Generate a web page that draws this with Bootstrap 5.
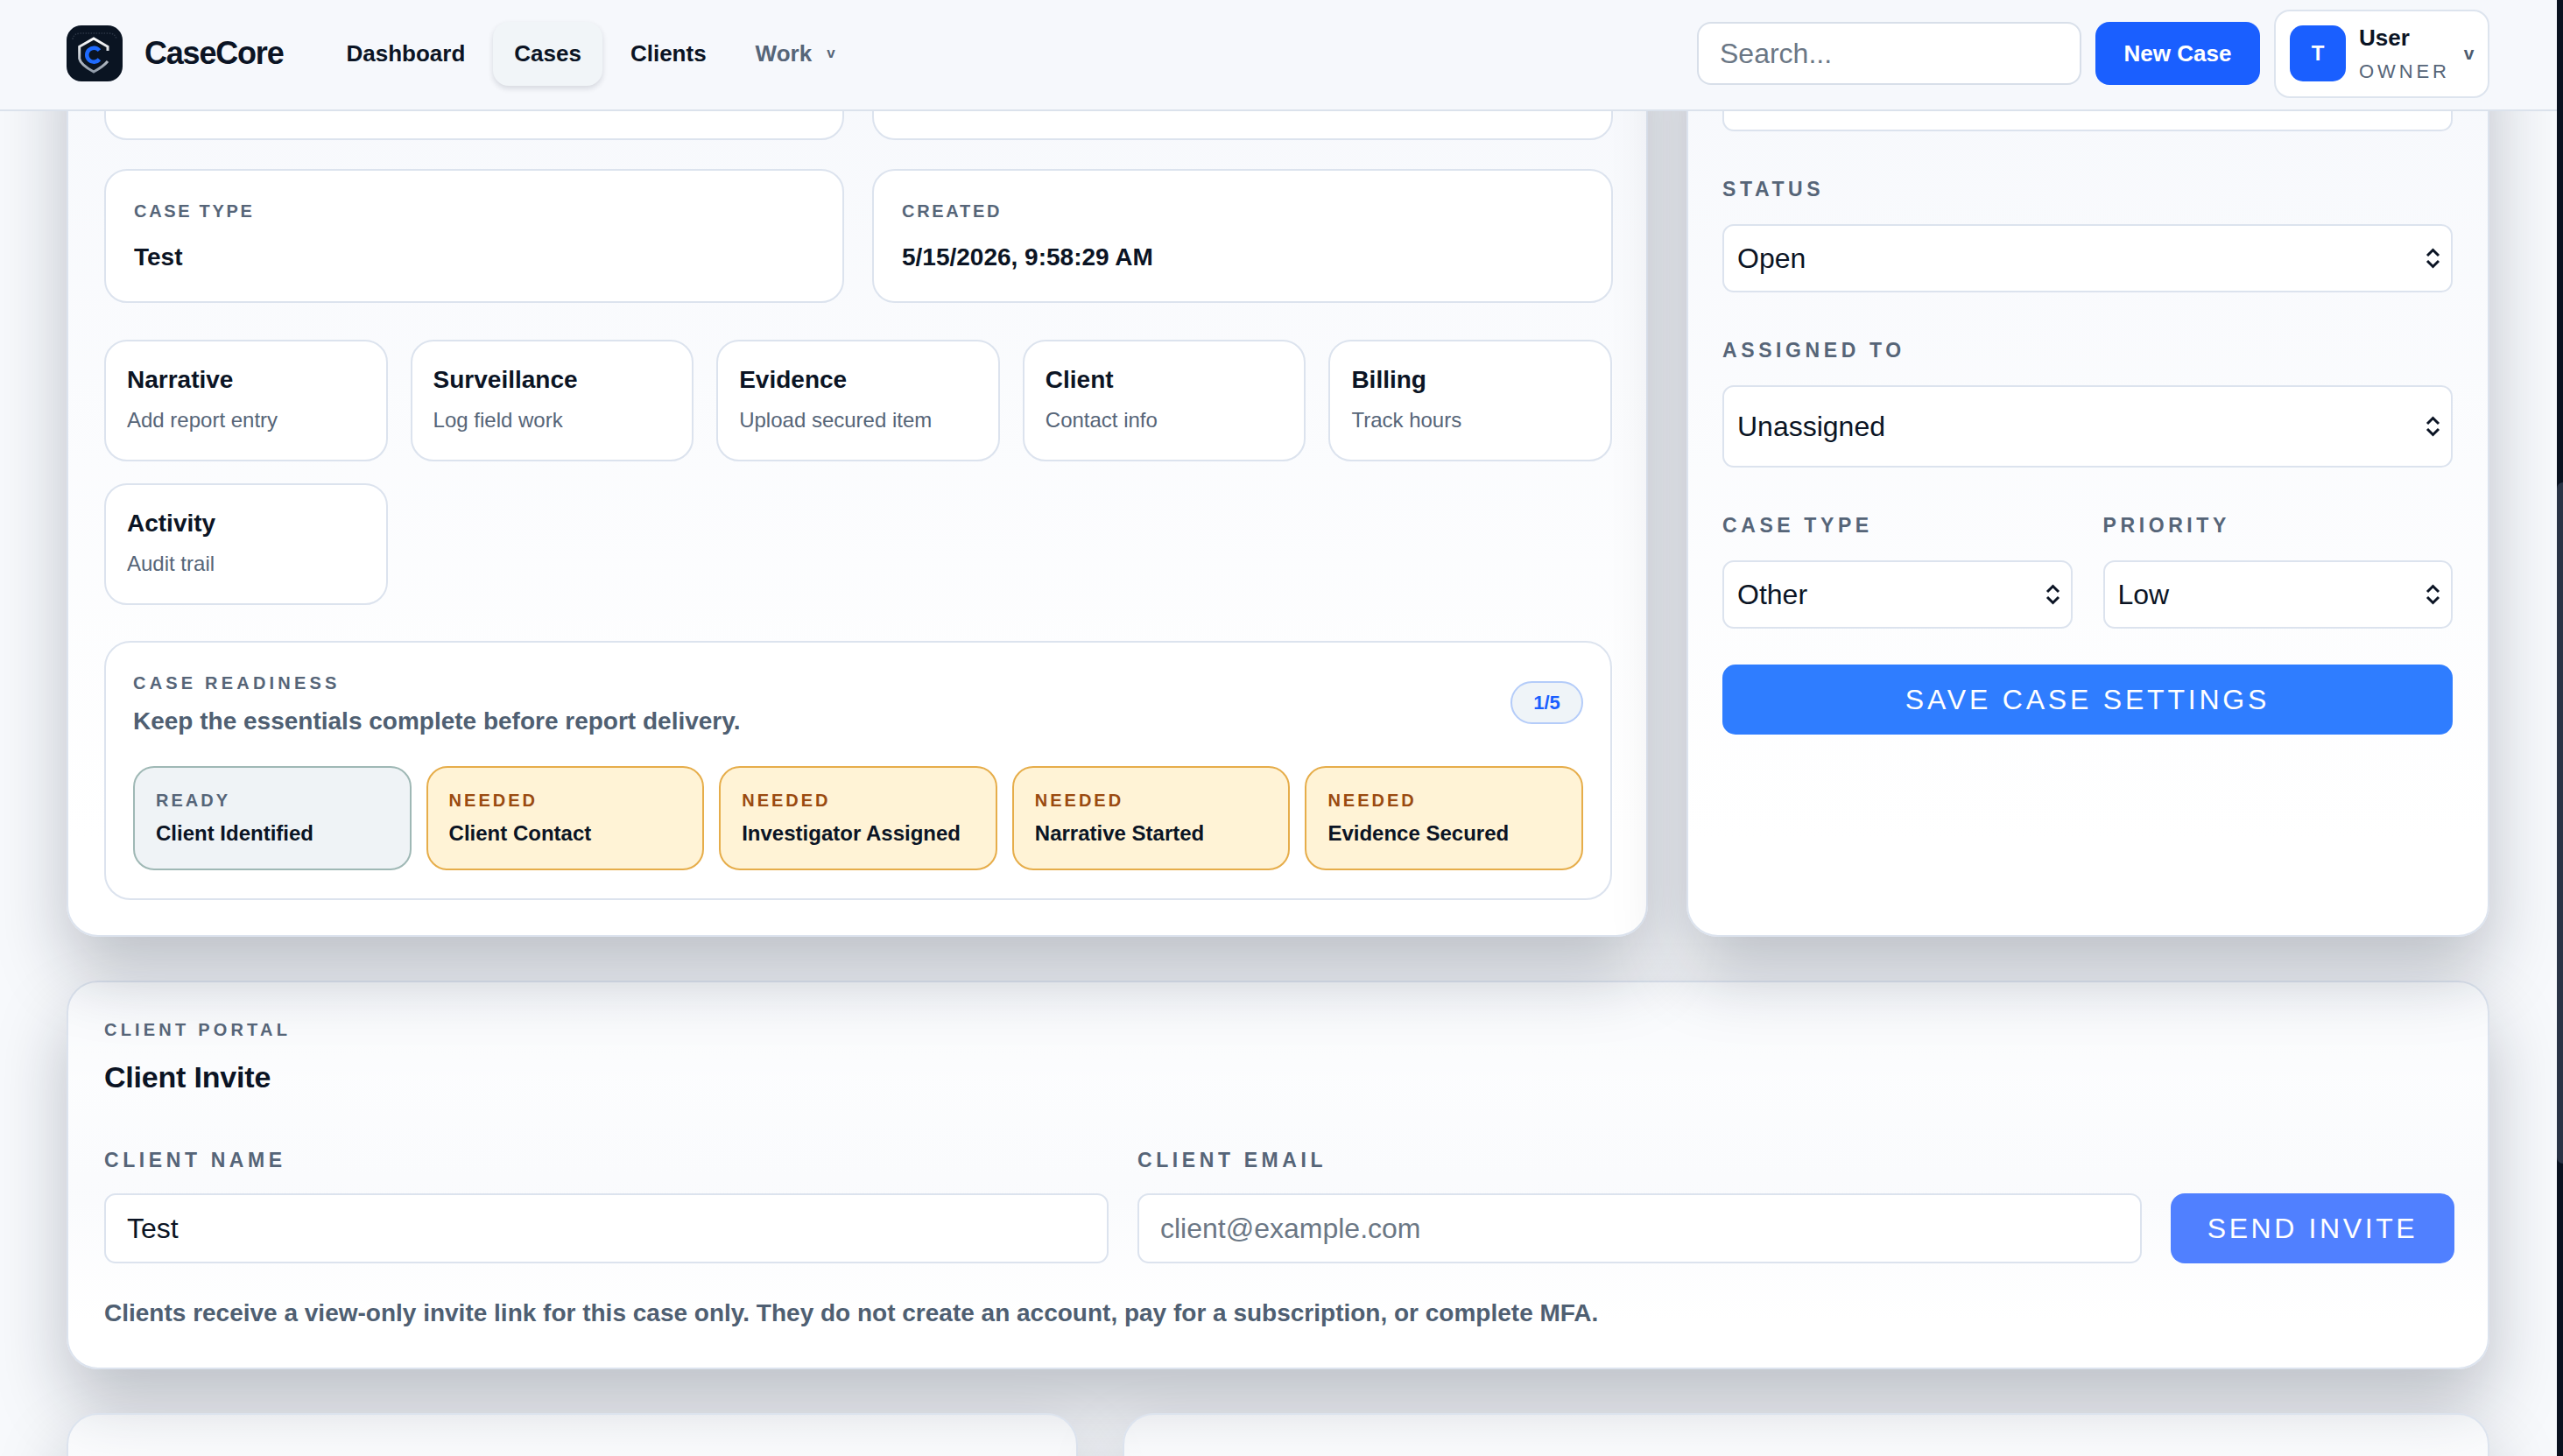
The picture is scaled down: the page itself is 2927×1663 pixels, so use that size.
<!DOCTYPE html>
<html lang="en">
<head>
<meta charset="utf-8">
<title>CaseCore</title>
<link rel="stylesheet" href="https://cdn.jsdelivr.net/npm/bootstrap@5.3.0/dist/css/bootstrap.min.css">
<style>
html,body{height:100%;overflow:hidden}
body{background:#f7f9fc;font-family:"Liberation Sans",Arial,sans-serif;color:#0b1424;}
.topbar{position:relative;z-index:20;height:127px;background:#f6f8fc;border-bottom:2px solid #dbe2ec;padding:0 84px 3px 76px;}
.logo-box{width:64px;height:64px;border-radius:17px;background:#0a1422;flex:none;}
.brand-name{font-size:36px;font-weight:700;letter-spacing:-1.2px;color:#0b1424;margin-left:25px;margin-right:48px;}
.nav-pill{font-size:26px;font-weight:700;color:#0b1424;height:73px;padding:0 24px;border-radius:18px;text-decoration:none;display:flex;align-items:center;}
.nav-pill.on{background:#f1f5f8;box-shadow:0 3px 6px rgba(15,23,42,.14);}
.nav-pill.soft{color:#566578;}
.caret-v{font-size:17px;margin-left:17px;}
.top-search{width:439px;height:72px;border:2px solid #d8dfe9;border-radius:16px;font-size:32px;padding:0 24px;color:#0b1424;background:#fff;}
.top-search::placeholder{color:#6b7785;}
.new-btn{width:188px;height:72px;background:#1a5fff;border:0;border-radius:16px;color:#fff;font-size:26px;font-weight:700;}
.user-box{width:246px;height:101px;background:#fff;border:2px solid #dde4ee;border-radius:18px;padding:0 0 0 16px;}
.avatar-box{width:64px;height:64px;border-radius:15px;background:#1a5fff;color:#fff;font-size:24px;font-weight:700;flex:none;}
.user-name{font-size:26px;font-weight:700;line-height:30px;}
.user-role{font-size:22px;letter-spacing:3.9px;color:#566578;line-height:26px;margin-top:11px;}
.user-caret{font-size:21px;font-weight:700;color:#4d5c70;margin-left:16px;}
.page-wrap{padding:0 84px 0 76px;margin-top:-127px;height:100vh;overflow:hidden;}
.upper-grid{display:grid;grid-template-columns:1806px 1fr;gap:44px;}
.shell{border:2px solid #dce3ee;border-radius:36px;background:linear-gradient(180deg,#f6f8fc 0,#fff 90%);box-shadow:0 40px 80px rgba(15,23,42,.25);}
.main-shell{height:1070px;padding:30px 39px 0 41px;}
.side-shell{height:1070px;padding:0 40px 0 39px;}
.info-grid{display:grid;grid-template-columns:845px 846px;gap:33px 32px;}
.info-card{background:#fff;border:2px solid #dce3ee;border-radius:26px;height:153px;padding:34px 32px 0;}
.info-card.clip{height:128px;}
.micro{font-size:20px;font-weight:700;letter-spacing:2.7px;line-height:24px;color:#566578;}
.micro.wide{letter-spacing:4.2px;}
.info-val{font-size:28px;font-weight:700;line-height:32px;margin-top:25px;}
.action-grid{display:grid;grid-template-columns:repeat(5,minmax(0,1fr));gap:25px 26px;margin-top:42px;}
.action-tile{background:#fff;border:2px solid #dce3ee;border-radius:26px;height:139px;padding:26px 24px 0;}
.action-title{font-size:28px;font-weight:700;line-height:36px;}
.action-sub{font-size:24px;color:#566578;line-height:28px;margin-top:14px;}
.ready-box{background:#fff;border:2px solid #dce3ee;border-radius:30px;height:296px;margin-top:41px;padding:34px 31px 0;}
.ready-lead{font-size:28px;font-weight:700;color:#4f5f72;line-height:32px;margin-top:16px;}
.count-pill{width:83px;height:49px;border:2px solid #b4ccf9;border-radius:25px;background:#eff4f8;color:#1a5fff;font-size:22px;font-weight:700;margin-top:10px;}
.step-grid{display:grid;grid-template-columns:repeat(5,minmax(0,1fr));gap:17px;margin-top:35px;}
.step-tile{height:119px;border-radius:24px;border:2px solid #e6ad4a;background:#fff3d6;padding:25px 24px 0;}
.step-tile.done{border-color:#9fb8b5;background:#eff3f6;}
.step-tag{font-size:20px;font-weight:700;letter-spacing:3px;line-height:24px;color:#9a4a10;}
.done .step-tag{color:#566578;}
.step-name{font-size:24px;font-weight:700;line-height:30px;margin-top:11px;}
.field-label{display:block;font-size:23px;font-weight:700;letter-spacing:4.6px;line-height:26px;color:#566578;margin:0 0 27px;}
.field-box{display:block;width:100%;height:78px;background:#fff;border:2px solid #dce3ee;border-radius:13px;font-size:32px;color:#0b1424;padding:0 15px;}
input.field-box{padding:0 24px;}
.field-box::placeholder{color:#6b7785;}
.select-wrap{position:relative;}
.select-wrap.gap-after{margin-bottom:53px;}
.select-wrap .field-box{appearance:none;}
.select-wrap svg{position:absolute;right:14px;top:50%;transform:translateY(-50%);width:17px;height:24px;pointer-events:none;}
.side-clip{height:148px;margin-bottom:53px;border:2px solid #dce3ee;border-radius:13px;background:#fff;}
.tall{height:94px;}
.side-pair{display:grid;grid-template-columns:1fr 1fr;gap:35px;}
.save-btn{display:block;width:100%;height:80px;margin-top:41px;background:#2f7dff;border:0;border-radius:15px;color:#fff;font-size:32px;letter-spacing:3.8px;}
.invite-shell{margin-top:50px;height:444px;padding:42px 38px 0 41px;background:linear-gradient(180deg,rgba(255,255,255,.12) 0,rgba(255,255,255,.6) 25%,rgba(250,251,253,.88) 55%,#fff 88%);}
.invite-title{font-size:34px;font-weight:700;letter-spacing:-.2px;line-height:42px;margin-top:21px;}
.invite-grid{display:grid;grid-template-columns:1147px 1147px 1fr;gap:33px;align-items:end;margin-top:61px;}
.invite-grid .field-label{margin-bottom:25px;}
.invite-grid .field-box{height:80px;}
.send-btn{height:80px;background:#5080ff;border:0;border-radius:16px;color:#fff;font-size:32px;letter-spacing:3.6px;}
.invite-note{font-size:28px;font-weight:700;color:#4f5f72;line-height:32px;margin-top:41px;}
.lower-grid{display:grid;grid-template-columns:1155px 1fr;gap:51px;margin-top:50px;}
.lower-shell{height:300px;background:linear-gradient(180deg,rgba(255,255,255,.35) 0,#fff 100%);}
.fake-scroll{position:fixed;top:0;right:0;bottom:0;width:7px;background:#0a1220;z-index:30;}
.fake-thumb{position:absolute;left:0;right:0;top:551px;height:778px;background:#2a3446;border-radius:7px 0 0 7px;}
</style>
</head>
<body>
<header class="topbar d-flex align-items-center">
  <div class="logo-box">
    <svg width="64" height="64" viewBox="0 0 64 64" fill="none">
      <defs><linearGradient id="sh" x1="0" y1="0" x2="0" y2="1"><stop offset="0" stop-color="#ffffff"/><stop offset="1" stop-color="#8f9aa8"/></linearGradient></defs>
      <path d="M7 16Q8 9 16 9H48Q56 9 57 16" stroke="#2c3645" stroke-width="1.5" stroke-dasharray="1.5 1.5"/>
      <path d="M47 29V24.3L31 15 14.7 24.3V38Q16 45 31 53 42 47 47 41" stroke="url(#sh)" stroke-width="3"/>
      <path d="M37.4 28.6A8 8 0 1 0 37.4 38.8" stroke="#1f6bff" stroke-width="4.5"/>
    </svg>
  </div>
  <div class="brand-name">CaseCore</div>
  <nav class="d-flex align-items-center" style="gap:8px">
    <a class="nav-pill" href="#">Dashboard</a>
    <a class="nav-pill on" href="#">Cases</a>
    <a class="nav-pill" href="#">Clients</a>
    <a class="nav-pill soft" href="#">Work<span class="caret-v">v</span></a>
  </nav>
  <div class="ms-auto d-flex align-items-center" style="gap:16px">
    <input class="top-search" placeholder="Search...">
    <button class="new-btn">New Case</button>
    <div class="user-box d-flex align-items-center">
      <div class="avatar-box d-flex align-items-center justify-content-center">T</div>
      <div style="margin-left:15px">
        <div class="user-name">User</div>
        <div class="user-role">OWNER</div>
      </div>
      <span class="user-caret">v</span>
    </div>
  </div>
</header>
<div class="page-wrap">
  <div class="upper-grid">
    <section class="shell main-shell">
      <div class="info-grid">
        <div class="info-card clip"></div>
        <div class="info-card clip"></div>
        <div class="info-card"><div class="micro">CASE TYPE</div><div class="info-val">Test</div></div>
        <div class="info-card"><div class="micro">CREATED</div><div class="info-val">5/15/2026, 9:58:29 AM</div></div>
      </div>
      <div class="action-grid">
        <div class="action-tile"><div class="action-title">Narrative</div><div class="action-sub">Add report entry</div></div>
        <div class="action-tile"><div class="action-title">Surveillance</div><div class="action-sub">Log field work</div></div>
        <div class="action-tile"><div class="action-title">Evidence</div><div class="action-sub">Upload secured item</div></div>
        <div class="action-tile"><div class="action-title">Client</div><div class="action-sub">Contact info</div></div>
        <div class="action-tile"><div class="action-title">Billing</div><div class="action-sub">Track hours</div></div>
        <div class="action-tile"><div class="action-title">Activity</div><div class="action-sub">Audit trail</div></div>
      </div>
      <div class="ready-box">
        <div class="d-flex justify-content-between align-items-start">
          <div><div class="micro wide">CASE READINESS</div><div class="ready-lead">Keep the essentials complete before report delivery.</div></div>
          <div class="count-pill d-flex align-items-center justify-content-center">1/5</div>
        </div>
        <div class="step-grid">
          <div class="step-tile done"><div class="step-tag">READY</div><div class="step-name">Client Identified</div></div>
          <div class="step-tile"><div class="step-tag">NEEDED</div><div class="step-name">Client Contact</div></div>
          <div class="step-tile"><div class="step-tag">NEEDED</div><div class="step-name">Investigator Assigned</div></div>
          <div class="step-tile"><div class="step-tag">NEEDED</div><div class="step-name">Narrative Started</div></div>
          <div class="step-tile"><div class="step-tag">NEEDED</div><div class="step-name">Evidence Secured</div></div>
        </div>
      </div>
    </section>
    <aside class="shell side-shell">
      <div class="side-clip"></div>
      <label class="field-label">STATUS</label>
      <div class="select-wrap gap-after"><select class="field-box"><option>Open</option></select><svg viewBox="0 0 17 24" fill="none" stroke="#0b1424" stroke-width="3"><path d="M2 9l6.5-6.5L15 9M2 15l6.5 6.5L15 15"/></svg></div>
      <label class="field-label">ASSIGNED TO</label>
      <div class="select-wrap gap-after"><select class="field-box tall"><option>Unassigned</option></select><svg viewBox="0 0 17 24" fill="none" stroke="#0b1424" stroke-width="3"><path d="M2 9l6.5-6.5L15 9M2 15l6.5 6.5L15 15"/></svg></div>
      <div class="side-pair">
        <div><label class="field-label">CASE TYPE</label><div class="select-wrap"><select class="field-box"><option>Other</option></select><svg viewBox="0 0 17 24" fill="none" stroke="#0b1424" stroke-width="3"><path d="M2 9l6.5-6.5L15 9M2 15l6.5 6.5L15 15"/></svg></div></div>
        <div><label class="field-label">PRIORITY</label><div class="select-wrap"><select class="field-box"><option>Low</option></select><svg viewBox="0 0 17 24" fill="none" stroke="#0b1424" stroke-width="3"><path d="M2 9l6.5-6.5L15 9M2 15l6.5 6.5L15 15"/></svg></div></div>
      </div>
      <button class="save-btn">SAVE CASE SETTINGS</button>
    </aside>
  </div>
  <section class="shell invite-shell">
    <div class="micro wide">CLIENT PORTAL</div>
    <div class="invite-title">Client Invite</div>
    <div class="invite-grid">
      <div><label class="field-label">CLIENT NAME</label><input class="field-box" value="Test"></div>
      <div><label class="field-label">CLIENT EMAIL</label><input class="field-box" placeholder="client@example.com"></div>
      <button class="send-btn">SEND INVITE</button>
    </div>
    <p class="invite-note mb-0">Clients receive a view-only invite link for this case only. They do not create an account, pay for a subscription, or complete MFA.</p>
  </section>
  <div class="lower-grid">
    <section class="shell lower-shell"></section>
    <section class="shell lower-shell"></section>
  </div>
</div>
<div class="fake-scroll"><div class="fake-thumb"></div></div>
<script src="https://cdn.jsdelivr.net/npm/bootstrap@5.3.0/dist/js/bootstrap.bundle.min.js"></script>
</body>
</html>
